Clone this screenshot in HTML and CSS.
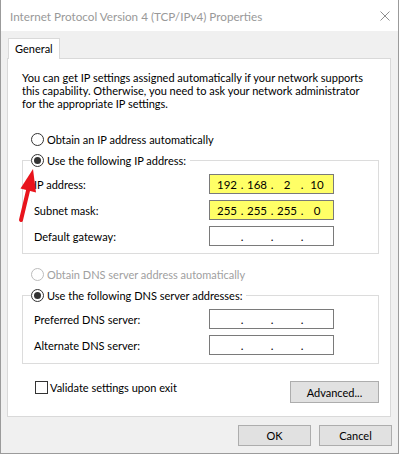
FILE: index.html
```html
<!DOCTYPE html>
<html>
<head>
<meta charset="utf-8">
<link rel="stylesheet" href="styles.css">
</head>
<body>
<div class="window">
  <div class="titlebar">
    <span class="title">Internet Protocol Version 4 (TCP/IPv4) Properties</span>
    <svg class="close" width="10" height="10" viewBox="0 0 10 10"><path d="M0.5 0.5L9.5 9.5M9.5 0.5L0.5 9.5" stroke="#8f8f8f" stroke-width="1"/></svg>
  </div>
  <div class="client">
    <div class="tabs"><div class="tab">General</div></div>
    <div class="panel">
      <p class="intro">You can get IP settings assigned automatically if your network supports<br>this capability. Otherwise, you need to ask your network administrator<br>for the appropriate IP settings.</p>
      <div class="option top"><span class="radio"></span><span>Obtain an IP address automatically</span></div>
      <fieldset class="group first">
        <legend class="option"><span class="radio checked"></span><span>Use the following IP address:</span></legend>
        <div class="field-row"><span class="label">IP address:</span><div class="ip filled"><span class="seg">192</span><span class="dot">.</span><span class="seg">168</span><span class="dot">.</span><span class="seg">2</span><span class="dot">.</span><span class="seg">10</span></div></div>
        <div class="field-row"><span class="label">Subnet mask:</span><div class="ip filled"><span class="seg">255</span><span class="dot">.</span><span class="seg">255</span><span class="dot">.</span><span class="seg">255</span><span class="dot">.</span><span class="seg">0</span></div></div>
        <div class="field-row"><span class="label">Default gateway:</span><div class="ip"><span class="seg"></span><span class="dot">.</span><span class="seg"></span><span class="dot">.</span><span class="seg"></span><span class="dot">.</span><span class="seg"></span></div></div>
      </fieldset>
      <div class="option dns disabled"><span class="radio"></span><span>Obtain DNS server address automatically</span></div>
      <fieldset class="group second">
        <legend class="option"><span class="radio checked"></span><span>Use the following DNS server addresses:</span></legend>
        <div class="field-row"><span class="label">Preferred DNS server:</span><div class="ip"><span class="seg"></span><span class="dot">.</span><span class="seg"></span><span class="dot">.</span><span class="seg"></span><span class="dot">.</span><span class="seg"></span></div></div>
        <div class="field-row"><span class="label">Alternate DNS server:</span><div class="ip"><span class="seg"></span><span class="dot">.</span><span class="seg"></span><span class="dot">.</span><span class="seg"></span><span class="dot">.</span><span class="seg"></span></div></div>
      </fieldset>
      <div class="bottom-row">
        <div class="check-row"><span class="checkbox"></span><span>Validate settings upon exit</span></div>
        <div class="button advanced">Advanced...</div>
      </div>
    </div>
    <div class="footer">
      <div class="button">OK</div>
      <div class="button">Cancel</div>
    </div>
  </div>
  <svg class="arrow" width="400" height="455" viewBox="0 0 400 455">
    <line x1="21" y1="220" x2="28.4" y2="189" stroke="#e8141c" stroke-width="4" stroke-linecap="round"/>
    <polygon points="33,169 36,192.5 20.5,188.5" fill="#e8141c"/>
  </svg>
</div>
</body>
</html>
```

FILE: styles.css
```css
* { box-sizing: border-box; }
html, body { margin: 0; padding: 0; background: #ffffff; }
body {
  font-family: Lato, "Noto Sans", "DejaVu Sans", sans-serif;
  font-size: 11px;
  color: #000;
}
.window {
  position: relative;
  width: 399px;
  height: 454px;
  border-left: 1px solid #9b9b9b;
  border-right: 1px solid #9b9b9b;
  border-bottom: 1px solid #9b9b9b;
  background: #f0f0f0;
  display: flex;
  flex-direction: column;
}
.titlebar {
  height: 31px;
  flex: none;
  background: #fff;
  display: flex;
  align-items: center;
  justify-content: space-between;
  padding: 0 8px 0 9px;
}
.title { color: #999; font-size: 11.7px; white-space: nowrap; }
.close { display: block; }
.client { padding: 7px 7px 0 6px; }
.tabs { display: flex; padding-left: 1px; }
.tab {
  position: relative;
  z-index: 1;
  width: 52px;
  height: 21px;
  margin-bottom: -1px;
  padding-left: 6px;
  border: 1px solid #d9d9d9;
  border-bottom: none;
  background: #fff;
  line-height: 19px;
}
.panel {
  height: 359px;
  border: 1px solid #d9d9d9;
  background: #fff;
  overflow: hidden;
}
.intro {
  margin: 12px 0 0 14px;
  line-height: 13px;
  white-space: nowrap;
}
.option {
  display: flex;
  align-items: center;
  height: 14px;
  white-space: nowrap;
}
.option.top { margin: 22px 0 0 23px; }
.option.dns { margin: 13px 0 0 23px; }
.disabled { color: #a0a0a0; }
.radio {
  width: 13px;
  height: 13px;
  flex: none;
  border: 1px solid #333;
  border-radius: 50%;
  background: #fff;
  margin-right: 3px;
  display: grid;
  place-items: center;
}
.disabled .radio { border-color: #bcbcbc; }
.radio.checked::after {
  content: "";
  width: 7px;
  height: 7px;
  border-radius: 50%;
  background: #333;
}
.group {
  margin: 7px 0 0 14px;
  width: 357px;
  min-width: 0;
  border: 1px solid #dcdcdc;
  padding: 0 0 7px 0;
}
.group.second { padding-bottom: 8px; }
.group legend {
  padding: 0 4px 0 0;
  margin-left: 8px;
  background: #fff;
}
.field-row {
  display: flex;
  align-items: center;
  height: 20px;
  margin: 6px 0 0 11px;
  white-space: nowrap;
}
.group legend + .field-row { margin-top: 7px; }
.label { width: 175px; flex: none; }
.ip {
  width: 125px;
  height: 20px;
  border: 1px solid #7a7a7a;
  background: #fff;
  display: flex;
  align-items: center;
  padding-left: 5px;
  font-size: 11.5px;
}
.ip.filled { background: #ffff66; }
.seg { width: 24px; text-align: center; }
.dot { width: 6px; text-align: center; }
.bottom-row {
  display: flex;
  justify-content: space-between;
  align-items: flex-start;
  margin-top: 17px;
  padding: 0 11px 0 27px;
}
.check-row {
  display: flex;
  align-items: center;
  height: 13px;
  white-space: nowrap;
}
.checkbox {
  width: 13px;
  height: 13px;
  border: 1px solid #333;
  background: #fff;
  margin-right: 2px;
}
.button {
  width: 73px;
  height: 21px;
  border: 1px solid #adadad;
  background: #e1e1e1;
  display: flex;
  align-items: center;
  justify-content: center;
}
.button.advanced { width: 89px; height: 22px; }
.footer {
  display: flex;
  justify-content: flex-end;
  gap: 8px;
  margin: 8px -1px 0 0;
}
.arrow {
  position: absolute;
  left: -1px;
  top: 0;
  pointer-events: none;
}
```
